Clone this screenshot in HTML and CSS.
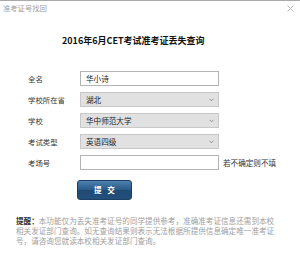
FILE: index.html
```html
<!DOCTYPE html>
<html lang="zh-CN">
<head>
<meta charset="utf-8">
<link rel="stylesheet" href="styles.css">
</head>
<body>
<div class="dialog">
  <div class="titlebar">
    <span class="title">准考证号找回</span>
    <svg class="close" width="7" height="7" viewBox="0 0 7 7"><path d="M0.5 0.5L6.5 6.5M6.5 0.5L0.5 6.5" stroke="#b8b8b8" stroke-width="0.9" fill="none"/></svg>
  </div>
  <h1 class="heading">2016年6月CET考试准考证丢失查询</h1>
  <div class="form">
    <span class="label">全名</span>
    <div class="box input">华小诗</div>
    <span></span>
    <span class="label">学校所在省</span>
    <div class="box select">湖北<svg class="arrow" width="5" height="4" viewBox="0 0 5 4"><path d="M0.5 0.8L2.5 2.8L4.5 0.8" stroke="#8a8a8a" stroke-width="0.9" fill="none"/></svg></div>
    <span></span>
    <span class="label">学校</span>
    <div class="box select">华中师范大学<svg class="arrow" width="5" height="4" viewBox="0 0 5 4"><path d="M0.5 0.8L2.5 2.8L4.5 0.8" stroke="#8a8a8a" stroke-width="0.9" fill="none"/></svg></div>
    <span></span>
    <span class="label">考试类型</span>
    <div class="box select">英语四级<svg class="arrow" width="5" height="4" viewBox="0 0 5 4"><path d="M0.5 0.8L2.5 2.8L4.5 0.8" stroke="#8a8a8a" stroke-width="0.9" fill="none"/></svg></div>
    <span></span>
    <span class="label">考场号</span>
    <div class="box input"></div>
    <span class="note">若不确定则不填</span>
  </div>
  <div class="actions"><button class="submit" type="button">提&nbsp;交</button></div>
  <p class="tip"><b>提醒：</b>本功能仅为丢失准考证号的同学提供参考，准确准考证信息还需到本校<br>相关发证部门查询。如无查询结果则表示无法根据所提供信息确定唯一准考证<br>号，请咨询您就读本校相关发证部门查询。</p>
</div>
</body>
</html>
```
FILE: styles.css
```css
* { box-sizing: border-box; }
html, body { margin: 0; padding: 0; background: #fff; }
body {
  font-family: "Noto Sans CJK SC", "Liberation Sans", sans-serif;
  color: #333;
  width: 300px;
  height: 265px;
  overflow: hidden;
}
.dialog {
  border-top: 1px solid #a9a9a9;
  height: 265px;
}
.titlebar {
  height: 15px;
  display: flex;
  align-items: center;
  justify-content: space-between;
  padding: 0 6px 0 3px;
}
.title {
  font-size: 7.3px;
  color: #a0a0a0;
  line-height: 1;
}
.close { display: block; }
.heading {
  margin: 19px 0 0 0;
  padding-left: 62px;
  font-size: 9px;
  font-weight: bold;
  line-height: 12px;
  color: #111;
}
.form {
  margin-top: 24px;
  padding-left: 28px;
  display: grid;
  grid-template-columns: 48px 139px auto;
  grid-auto-rows: 15px;
  row-gap: 6px;
  column-gap: 4px;
  align-items: center;
}
.label {
  font-size: 7.4px;
  line-height: 1;
  color: #333;
}
.box {
  height: 15px;
  border: 1px solid #b4b4b4;
  font-size: 7.6px;
  line-height: 13px;
  padding: 0 5px;
  color: #222;
  position: relative;
}
.input { background: #fff; }
.select { background: #e1e1e1; border-color: #c8c8c8; }
.arrow {
  position: absolute;
  right: 4px;
  top: 5px;
}
.note {
  font-size: 7.6px;
  line-height: 1;
  color: #333;
}
.actions {
  margin-top: 10px;
  padding-left: 77px;
}
.submit {
  width: 55px;
  height: 20px;
  border: 1px solid #1c3f63;
  border-radius: 3px;
  background: linear-gradient(#4c80ad, #2a5a87 50%, #1f4a74 51%, #234f7b);
  color: #fff;
  font-family: inherit;
  font-size: 7.6px;
  font-weight: bold;
  letter-spacing: 2px;
  text-indent: 2px;
  padding: 0;
  line-height: 18px;
  display: block;
}
.tip {
  margin: 16px 0 0 0;
  padding-left: 16px;
  font-size: 7.6px;
  line-height: 10px;
  color: #a0a0a0;
  white-space: nowrap;
}
.tip b { color: #333; }
```
